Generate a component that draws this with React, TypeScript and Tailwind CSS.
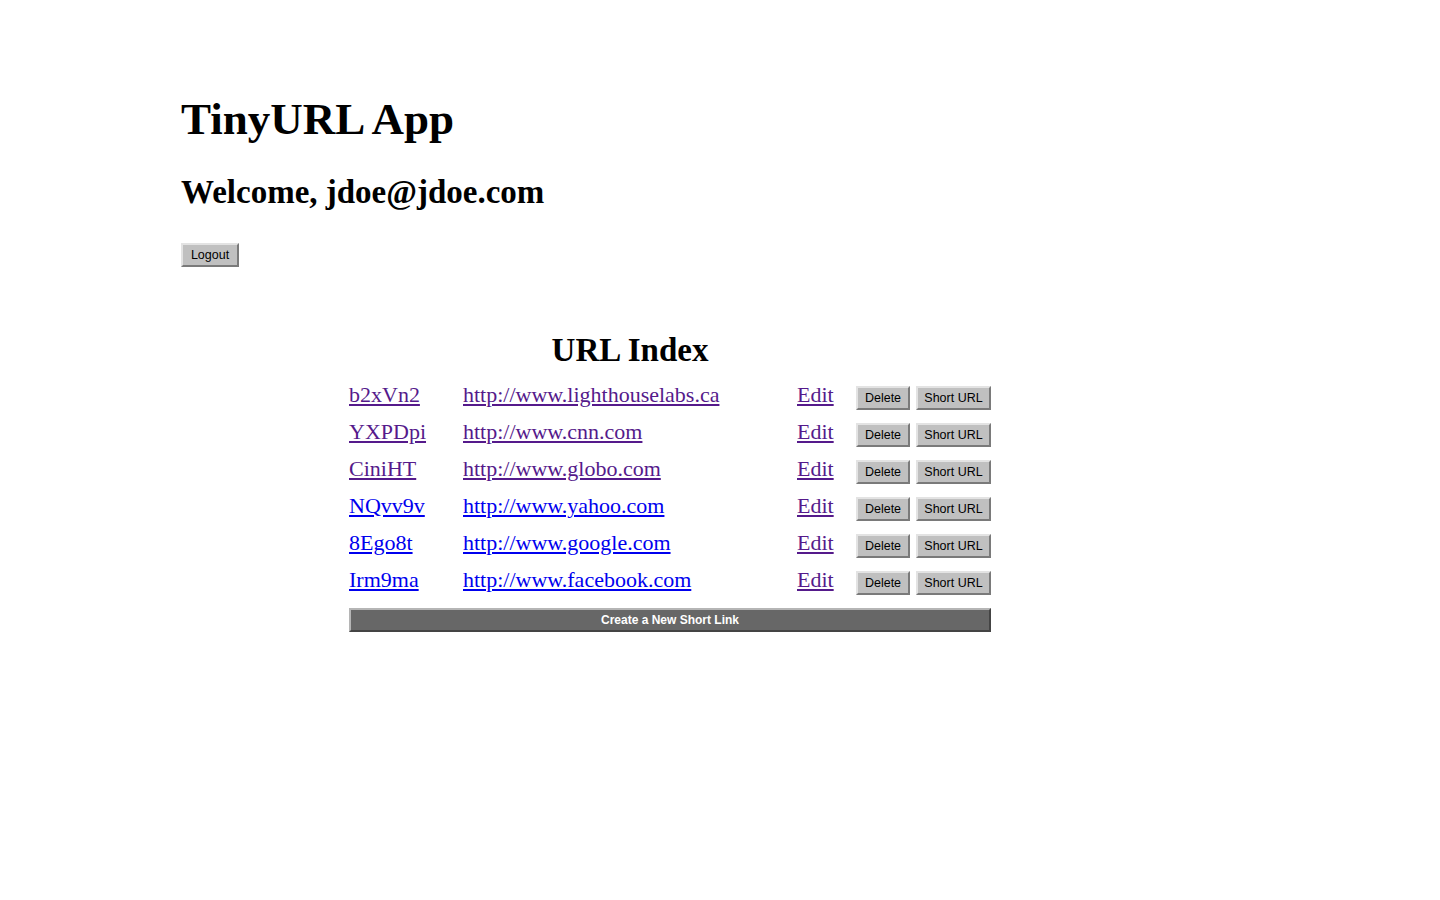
const urls = [
  { id: 'b2xVn2', long: 'http://www.lighthouselabs.ca', visited: true },
  { id: 'YXPDpi', long: 'http://www.cnn.com', visited: true },
  { id: 'CiniHT', long: 'http://www.globo.com', visited: true },
  { id: 'NQvv9v', long: 'http://www.yahoo.com', visited: false },
  { id: '8Ego8t', long: 'http://www.google.com', visited: false },
  { id: 'Irm9ma', long: 'http://www.facebook.com', visited: false },
];

const serif = { fontFamily: '"Liberation Serif", "Times New Roman", serif' };

function GrayButton({ label, width }: { label: string; width: string }) {
  return (
    <button
      className={`${width} h-[24px] bg-[#c0c0c0] border-2 border-t-[#e3e3e3] border-l-[#e3e3e3] border-b-[#7a7a7a] border-r-[#7a7a7a] text-[12.5px] text-black leading-none font-['Liberation_Sans',Arial,sans-serif]`}
    >
      {label}
    </button>
  );
}

export default function App() {
  return (
    <div className="min-h-[900px] w-[1440px] bg-white text-black" style={serif}>
      <div className="pl-[181px] pt-[94px]">
        <h1 className="text-[45px] leading-[50px] font-bold">TinyURL App</h1>
        <h2 className="mt-[29px] text-[33px] leading-[38px] font-bold">Welcome, jdoe@jdoe.com</h2>
        <div className="mt-[31px]">
          <GrayButton label="Logout" width="w-[58px]" />
        </div>
      </div>

      <div className="w-[898px] ml-[181px] mt-[64px]">
        <h2 className="text-center text-[33px] leading-[38px] font-bold">URL Index</h2>
      </div>

      <div className="ml-[349px] w-[642px] mt-[7px]">
        {urls.map((u) => {
          const linkColor = u.visited ? 'text-[#551a8b]' : 'text-[#0000ee]';
          return (
            <div key={u.id} className="flex items-start h-[37px] text-[22px] leading-[37px]">
              <a href="#" className={`w-[114px] underline ${linkColor}`}>
                {u.id}
              </a>
              <a href="#" className={`w-[334px] underline ${linkColor}`}>
                {u.long}
              </a>
              <a href="#" className="w-[59px] underline text-[#551a8b]">
                Edit
              </a>
              <div className="flex gap-[6px] mt-[10px]">
                <GrayButton label="Delete" width="w-[54px]" />
                <GrayButton label="Short URL" width="w-[75px]" />
              </div>
            </div>
          );
        })}
        <button className="mt-[10px] w-[642px] h-[24px] bg-[#676767] border-2 border-t-[#b5b5b5] border-l-[#b5b5b5] border-b-[#444] border-r-[#444] text-white text-[12px] font-bold leading-none font-['Liberation_Sans',Arial,sans-serif]">
          Create a New Short Link
        </button>
      </div>
    </div>
  );
}
